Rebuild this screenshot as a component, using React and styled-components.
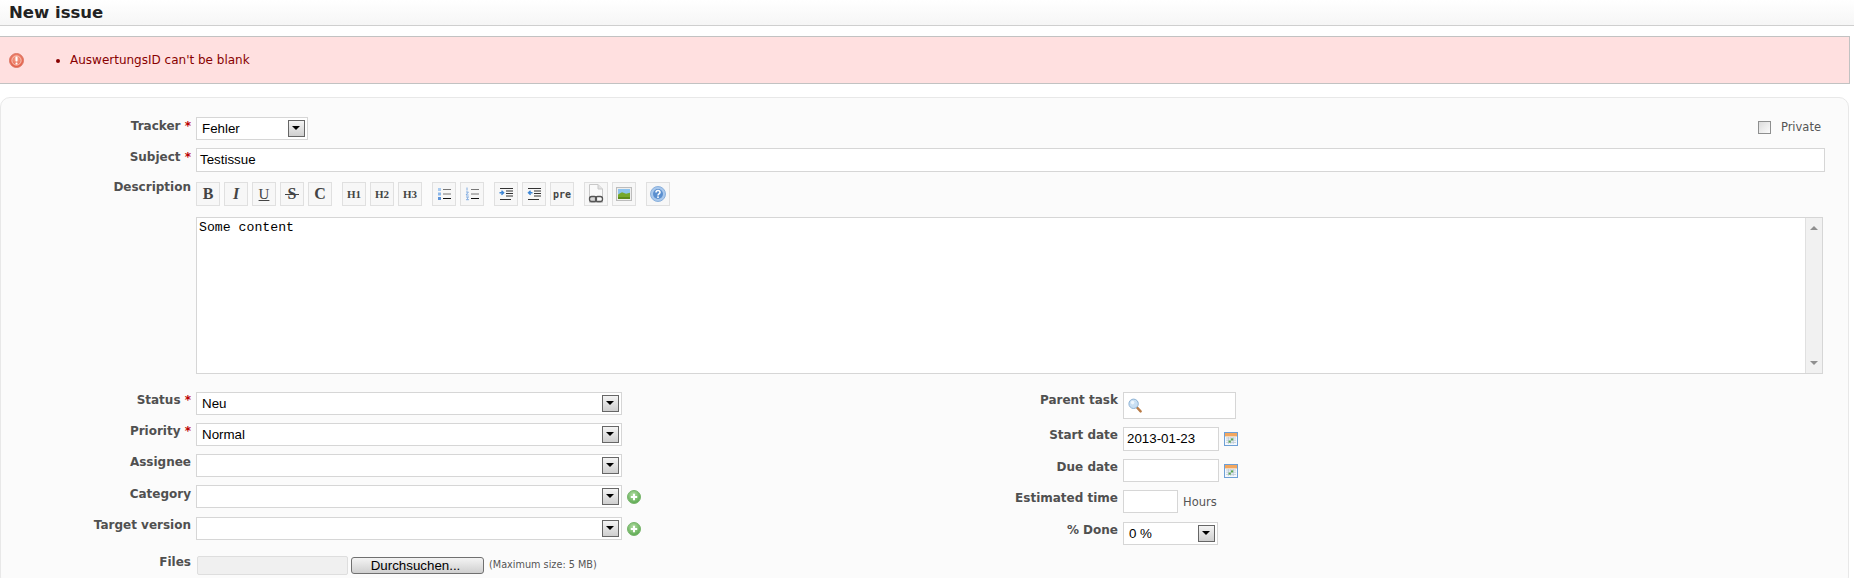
import styled, { createGlobalStyle } from "styled-components";

const GlobalStyle = createGlobalStyle`
  html, body {
    margin: 0;
    padding: 0;
    background: #fff;
    overflow: hidden;
  }
  body {
    font-family: "DejaVu Sans", Verdana, sans-serif;
    font-size: 11px;
    color: #484848;
  }
`;

function ErrorIcon() {
  return (
    <svg width="15" height="15" viewBox="0 0 15 15">
      <defs>
        <radialGradient id="errBg" cx="50%" cy="40%" r="60%">
          <stop offset="0%" stopColor="#f6a58f" />
          <stop offset="100%" stopColor="#e2563f" />
        </radialGradient>
      </defs>
      <circle cx="7.5" cy="7.5" r="7" fill="url(#errBg)" stroke="#dd7a68" />
      <circle cx="7.5" cy="7.5" r="4.6" fill="none" stroke="#fbd6cc" strokeWidth="0.8" />
      <rect x="6.5" y="3.6" width="2" height="5" rx="0.8" fill="#fff" />
      <rect x="6.5" y="9.5" width="2" height="2" rx="0.8" fill="#fff" />
    </svg>
  );
}

function PlusIcon() {
  return (
    <svg width="14" height="14" viewBox="0 0 14 14">
      <defs>
        <radialGradient id="plusBg" cx="45%" cy="35%" r="65%">
          <stop offset="0%" stopColor="#b6e0a6" />
          <stop offset="100%" stopColor="#5aa84f" />
        </radialGradient>
      </defs>
      <circle cx="7" cy="7" r="6.5" fill="url(#plusBg)" stroke="#79b56d" />
      <path d="M7 3.8v6.4M3.8 7h6.4" stroke="#fff" strokeWidth="2" />
    </svg>
  );
}

function CalendarIcon() {
  return (
    <svg width="14" height="14" viewBox="0 0 14 14">
      <rect x="0.5" y="0.5" width="13" height="13" fill="#f4f8fc" stroke="#6d9fd6" />
      <rect x="1" y="1" width="12" height="3.4" fill="#f2a65e" />
      <path d="M2 6h10M2 8.2h10M2 10.4h10M4.4 5v7M6.8 5v7M9.2 5v7" stroke="#b9c6d2" strokeWidth="0.8" />
      <rect x="7" y="6.4" width="2.2" height="2" fill="#5aa84f" />
      <rect x="4.6" y="8.6" width="2.2" height="2" fill="#5aa84f" />
    </svg>
  );
}

function SearchIcon() {
  return (
    <svg width="14" height="15" viewBox="0 0 14 15">
      <path d="M8.6 9l4 4.4" stroke="#b87a45" strokeWidth="2.4" strokeLinecap="round" />
      <circle cx="5.6" cy="5.8" r="4.7" fill="#c9dff3" stroke="#8db2d4" />
      <circle cx="4.6" cy="4.6" r="1.8" fill="#eef6fd" />
    </svg>
  );
}

function BulletListIcon() {
  return (
    <svg width="14" height="14" viewBox="0 0 14 14">
      <rect x="1" y="1" width="3" height="3" fill="#a9cbf0" />
      <rect x="1" y="5.5" width="3" height="3" fill="#8db8ea" />
      <rect x="1" y="10" width="3" height="3" fill="#5d93d8" />
      <path d="M6 2.5h8M6 7h8" stroke="#777" />
      <path d="M6 11.5h8" stroke="#111" />
    </svg>
  );
}

function NumberListIcon() {
  return (
    <svg width="14" height="14" viewBox="0 0 14 14">
      <path d="M2 0.500v3M1 5h2.400L1 8h2.600M1 10h2.600L2 11.300l1.600 1.400H1" stroke="#7faae0" fill="none" />
      <path d="M6 2.5h8M6 7h8" stroke="#777" />
      <path d="M6 11.5h8" stroke="#111" />
    </svg>
  );
}

function IndentIcon({ out }) {
  return (
    <svg width="14" height="14" viewBox="0 0 14 14">
      <path d="M1 1.500h13M7 4h7M7 6.500h7M7 9h7M1 12.500h11" stroke="#333" />
      {out ? (
        <path d="M5.500 5.700H2.500M3.600 3.700L1.500 5.700l2.100 2" stroke="#3d86d6" strokeWidth="1.400" fill="none" />
      ) : (
        <path d="M.5 5.700h3.500M2.500 3.700l2.100 2-2.100 2" stroke="#3d86d6" strokeWidth="1.400" fill="none" />
      )}
    </svg>
  );
}

function LinkDocIcon() {
  return (
    <svg width="16" height="20" viewBox="0 0 16 20">
      <path d="M1.500 .5h8.500l4.500 4.500v13.500h-13z" fill="#fafafa" stroke="#c8c8c8" />
      <path d="M10 .5v4.500h4.500" fill="#e2e2e2" stroke="#c8c8c8" />
      <rect x="1.500" y="12.500" width="7" height="5" rx="2.200" fill="#d8d8d8" stroke="#555" strokeWidth="1.300" />
      <rect x="7.500" y="12.500" width="7" height="5" rx="2.200" fill="none" stroke="#555" strokeWidth="1.300" />
    </svg>
  );
}

function ImageIcon() {
  return (
    <svg width="16" height="14" viewBox="0 0 16 14">
      <rect x="0.500" y="0.500" width="15" height="13" fill="#eee" stroke="#bcbcbc" />
      <rect x="2" y="2" width="12" height="5" fill="#8ec4ee" />
      <path d="M2 7.500l4-2.200 4 1.500 4-1v5.700H2z" fill="#76a82c" />
      <rect x="2" y="10" width="12" height="2" fill="#5d8a1e" />
    </svg>
  );
}

function HelpIcon() {
  return (
    <svg width="16" height="16" viewBox="0 0 16 16">
      <circle cx="8" cy="8" r="7.500" fill="#a9c8ec" stroke="#8ab0dc" />
      <circle cx="8" cy="8" r="5" fill="#5a8fcf" />
      <path d="M6 6.400c0-2.400 4-2.400 4 0 0 1.400-2 1.400-2 3" fill="none" stroke="#fff" strokeWidth="1.500" />
      <rect x="7.200" y="10.400" width="1.600" height="1.600" fill="#fff" />
    </svg>
  );
}

function Select({ value, width }) {
  return (
    <SelectBox $width={width}>
      <SelectValue>{value}</SelectValue>
      <DropButton />
    </SelectBox>
  );
}

function LabelText({ children, required, shift }) {
  return (
    <Label $shift={shift}>
      {children}
      {required && <Required> *</Required>}
    </Label>
  );
}

const leftFields = [
  { label: "Status", value: "Neu", required: true, gap: 8 },
  { label: "Priority", value: "Normal", required: true, gap: 8 },
  { label: "Assignee", value: "", gap: 8 },
  { label: "Category", value: "", add: true, gap: 9, shift: 1 },
  { label: "Target version", value: "", add: true, gap: 0 },
];

export default function App() {
  return (
    <>
      <GlobalStyle />
      <Page>
        <Header>
          <Title>New issue</Title>
        </Header>
        <ErrorBox>
          <ErrorIcon />
          <ErrorList>
            <li>AuswertungsID can't be blank</li>
          </ErrorList>
        </ErrorBox>
        <Panel>
          <Row $gap={8}>
            <LabelText required shift={1}>Tracker</LabelText>
            <Select value="Fehler" width={112} />
            <PrivateCheck>
              <CheckBox />
              Private
            </PrivateCheck>
          </Row>
          <Row $gap={10}>
            <LabelText required shift={1}>Subject</LabelText>
            <TextField $grow $height={24}>Testissue</TextField>
          </Row>
          <Row $gap={11}>
            <LabelText shift={-3}>Description</LabelText>
            <Toolbar>
              <ToolGroup>
                <ToolButton $size={16}><b>B</b></ToolButton>
                <ToolButton $size={16}><i><b>I</b></i></ToolButton>
                <ToolButton $size={15}><u>U</u></ToolButton>
                <ToolButton $size={16}><Struck>S</Struck></ToolButton>
                <ToolButton $size={16}><b>C</b></ToolButton>
              </ToolGroup>
              <ToolGroup>
                <ToolButton $size={11}><b>H1</b></ToolButton>
                <ToolButton $size={11}><b>H2</b></ToolButton>
                <ToolButton $size={11}><b>H3</b></ToolButton>
              </ToolGroup>
              <ToolGroup>
                <ToolButton><BulletListIcon /></ToolButton>
                <ToolButton><NumberListIcon /></ToolButton>
              </ToolGroup>
              <ToolGroup>
                <ToolButton><IndentIcon /></ToolButton>
                <ToolButton><IndentIcon out /></ToolButton>
                <ToolButton $mono>pre</ToolButton>
              </ToolGroup>
              <ToolGroup>
                <ToolButton><LinkDocIcon /></ToolButton>
                <ToolButton><ImageIcon /></ToolButton>
              </ToolGroup>
              <ToolGroup>
                <ToolButton><HelpIcon /></ToolButton>
              </ToolGroup>
            </Toolbar>
          </Row>
          <Row $gap={18}>
            <Label />
            <TextArea>
              <AreaText>Some content</AreaText>
              <ScrollBar>
                <ScrollArrow $up />
                <ScrollArrow />
              </ScrollBar>
            </TextArea>
          </Row>
          <Columns>
            <Column>
              {leftFields.map((field) => (
                <Row $gap={field.gap} key={field.label}>
                  <LabelText required={field.required} shift={field.shift}>
                    {field.label}
                  </LabelText>
                  <Select value={field.value} width={426} />
                  {field.add && <Trailing><PlusIcon /></Trailing>}
                </Row>
              ))}
            </Column>
            <Column>
              <Row $gap={8}>
                <Label>Parent task</Label>
                <TextField $width={113} $height={27} $pad={4}>
                  <SearchIcon />
                </TextField>
              </Row>
              <Row $gap={8}>
                <Label>Start date</Label>
                <TextField $width={96} $height={24}>2013-01-23</TextField>
                <Trailing><CalendarIcon /></Trailing>
              </Row>
              <Row $gap={8}>
                <Label>Due date</Label>
                <TextField $width={96} $height={23} />
                <Trailing><CalendarIcon /></Trailing>
              </Row>
              <Row $gap={8}>
                <Label>Estimated time</Label>
                <TextField $width={55} $height={23} />
                <Hours>Hours</Hours>
              </Row>
              <Row $gap={8}>
                <Label>% Done</Label>
                <Select value="0 %" width={95} />
              </Row>
            </Column>
          </Columns>
          <Row $gap={0} $offset={3}>
            <LabelText shift={-2}>Files</LabelText>
            <FilePath />
            <FileButton>Durchsuchen...</FileButton>
            <MaxSize>(Maximum size: 5 MB)</MaxSize>
          </Row>
        </Panel>
      </Page>
    </>
  );
}

const Page = styled.div`
  width: 1854px;
  height: 578px;
  overflow: hidden;
`;

const Header = styled.div`
  height: 25px;
  padding-left: 9px;
  border-bottom: 1px solid #cfcfcf;
  background: linear-gradient(#fff, #f6f6f6);
`;

const Title = styled.h2`
  margin: 0;
  font-size: 16.5px;
  line-height: 25px;
  font-weight: bold;
  color: #222;
`;

const ErrorBox = styled.div`
  display: flex;
  align-items: center;
  box-sizing: border-box;
  width: 1850px;
  height: 48px;
  margin-top: 10px;
  padding-left: 9px;
  background: #ffe0e0;
  border: 1px solid #c2c2c2;
  border-left: 0;
`;

const ErrorList = styled.ul`
  margin: 0;
  padding-left: 46px;
  color: #880000;
  font-size: 12px;
`;

const Panel = styled.div`
  box-sizing: border-box;
  width: 1849px;
  height: 490px;
  margin-top: 13px;
  padding: 19px 23px 0 0;
  background: #fbfbfb;
  border: 1px solid #e8e8e8;
  border-radius: 10px;
`;

const Row = styled.div`
  display: flex;
  align-items: flex-start;
  margin-bottom: ${(p) => p.$gap}px;
  margin-top: ${(p) => p.$offset || 0}px;
`;

const Label = styled.div`
  flex: none;
  box-sizing: border-box;
  width: 190px;
  margin-right: 5px;
  margin-top: ${(p) => p.$shift || 0}px;
  text-align: right;
  font-size: 12px;
  line-height: 16px;
  font-weight: bold;
  color: #505050;
  white-space: nowrap;
`;

const Required = styled.span`
  color: #bb0000;
`;

const SelectBox = styled.div`
  flex: none;
  display: flex;
  align-items: center;
  justify-content: space-between;
  box-sizing: border-box;
  width: ${(p) => p.$width}px;
  height: 23px;
  padding: 0 2px 0 5px;
  background: #fff;
  border: 1px solid #d6d6d6;
`;

const SelectValue = styled.span`
  font-family: "Liberation Sans", Arial, sans-serif;
  font-size: 13.33px;
  color: #000;
`;

const DropButton = styled.span`
  position: relative;
  flex: none;
  box-sizing: border-box;
  width: 17px;
  height: 17px;
  border: 1px solid #666;
  background: linear-gradient(#f4f4f4, #cfcfcf);
  &::after {
    content: "";
    position: absolute;
    left: 3px;
    top: 5px;
    border-style: solid;
    border-width: 4px 4px 0;
    border-color: #000 transparent transparent;
  }
`;

const PrivateCheck = styled.div`
  display: flex;
  align-items: center;
  gap: 10px;
  margin: 2px 4px 0 auto;
  font-size: 11.5px;
  line-height: 16px;
  color: #555;
`;

const CheckBox = styled.span`
  box-sizing: border-box;
  width: 13px;
  height: 13px;
  border: 1px solid #8e8f8f;
  background: linear-gradient(135deg, #dcdcdc, #fbfbfb);
`;

const TextField = styled.div`
  display: flex;
  align-items: center;
  box-sizing: border-box;
  ${(p) => (p.$grow ? "flex: 1;" : `flex: none; width: ${p.$width}px;`)}
  height: ${(p) => p.$height}px;
  padding-left: ${(p) => p.$pad ?? 3}px;
  padding-bottom: 1px;
  background: #fff;
  border: 1px solid #d6d6d6;
  font-family: "Liberation Sans", Arial, sans-serif;
  font-size: 13.33px;
  color: #000;
`;

const Toolbar = styled.div`
  display: flex;
  gap: 10px;
`;

const ToolGroup = styled.div`
  display: flex;
  gap: 4px;
`;

const ToolButton = styled.span`
  display: flex;
  align-items: center;
  justify-content: center;
  box-sizing: border-box;
  width: 24px;
  height: 24px;
  background: #f7f7f7;
  border: 1px solid #e0e0e0;
  font-family: ${(p) =>
    p.$mono ? '"DejaVu Sans Mono", monospace' : '"Liberation Serif", serif'};
  font-size: ${(p) => (p.$mono ? 10 : p.$size || 12)}px;
  font-weight: ${(p) => (p.$mono ? "bold" : "normal")};
  color: #444;
`;

const Struck = styled.span`
  position: relative;
  font-weight: bold;
  &::after {
    content: "";
    position: absolute;
    left: -3px;
    right: -3px;
    top: 50%;
    height: 1px;
    background: #444;
  }
`;

const TextArea = styled.div`
  display: flex;
  flex: 1;
  box-sizing: border-box;
  height: 157px;
  margin-right: 2px;
  background: #fff;
  border: 1px solid #d6d6d6;
`;

const AreaText = styled.div`
  flex: 1;
  padding: 2px 2px;
  font-family: "Liberation Mono", "Courier New", monospace;
  font-size: 13.2px;
  line-height: 15px;
  color: #000;
`;

const ScrollBar = styled.div`
  display: flex;
  flex-direction: column;
  justify-content: space-between;
  align-items: center;
  box-sizing: border-box;
  width: 17px;
  padding: 8px 0;
  background: #f1f1f1;
  border-left: 1px solid #e0e0e0;
`;

const ScrollArrow = styled.span`
  border-style: solid;
  border-width: ${(p) => (p.$up ? "0 4px 4px" : "4px 4px 0")};
  border-color: ${(p) =>
    p.$up
      ? "transparent transparent #8f8f8f"
      : "#8f8f8f transparent transparent"};
`;

const Columns = styled.div`
  display: grid;
  grid-template-columns: 927px 1fr;
`;

const Column = styled.div`
  display: flex;
  flex-direction: column;
`;

const Trailing = styled.span`
  display: flex;
  align-items: center;
  height: 23px;
  margin-left: 5px;
`;

const Hours = styled.span`
  margin-left: 5px;
  line-height: 24px;
  font-size: 11.5px;
  color: #555;
`;

const FilePath = styled.div`
  box-sizing: border-box;
  width: 151px;
  height: 19px;
  margin-left: 1px;
  background: #f0f0f0;
  border: 1px solid #dedede;
  border-radius: 2px;
`;

const FileButton = styled.span`
  display: flex;
  align-items: center;
  justify-content: center;
  box-sizing: border-box;
  width: 133px;
  height: 17px;
  margin: 1px 0 0 3px;
  padding-right: 4px;
  background: linear-gradient(#f4f4f4, #cfcfcf);
  border: 1px solid #707070;
  border-radius: 3px;
  font-family: "Liberation Sans", Arial, sans-serif;
  font-size: 13.33px;
  color: #000;
`;

const MaxSize = styled.span`
  margin-left: 5px;
  line-height: 17px;
  font-size: 9.7px;
  color: #555;
`;
